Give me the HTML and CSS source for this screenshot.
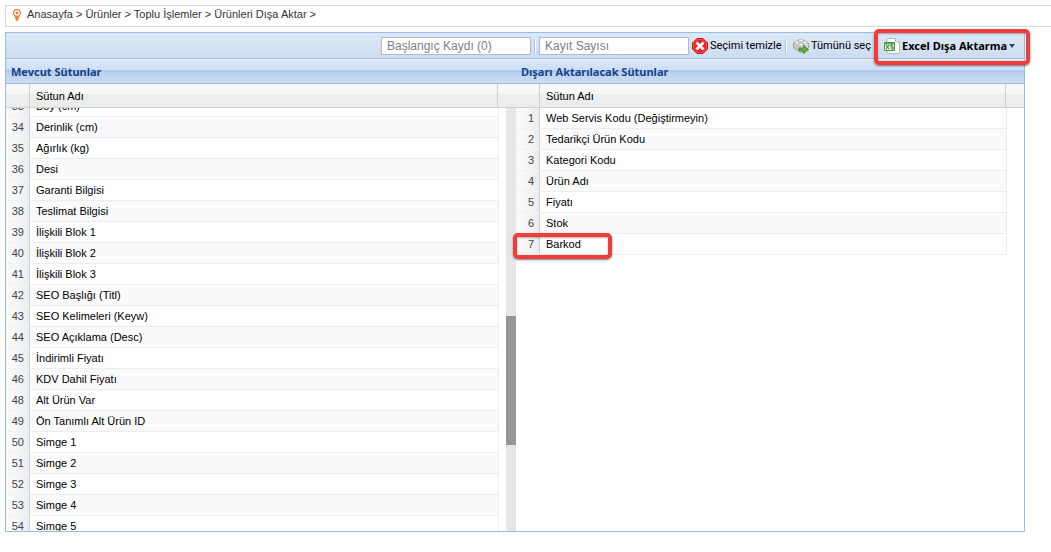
FILE: index.html
```
<!DOCTYPE html>
<html lang="tr">
<head>
<meta charset="utf-8">
<title>Ürünleri Dışa Aktar</title>
<link rel="stylesheet" href="styles.css">
</head>
<body>
<nav class="breadcrumb">
  <svg class="pin" viewBox="0 0 8 12" aria-hidden="true"><path fill="#f47b30" fill-rule="evenodd" d="M4 0a4 4 0 0 1 4 4c0 2-2 4-3.100 5.500h-1.800C2 8 0 6 0 4a4 4 0 0 1 4-4zM4 1.200a2.800 2.800 0 1 0 0 5.600 2.800 2.800 0 0 0 0-5.600z"/><circle cx="4" cy="4" r="1.500" fill="#f47b30"/><path d="M2.500 8h3v3L4 12l-1.500-1z" fill="#f47b30"/></svg>
  <span><a href="#">Anasayfa</a> &gt; <a href="#">Ürünler</a> &gt; <a href="#">Toplu İşlemler</a> &gt; <a href="#">Ürünleri Dışa Aktar</a> &gt;</span>
</nav>
<main class="panel">
  <div class="toolbar">
    <input class="field" type="text" placeholder="Başlangıç Kaydı (0)" aria-label="Başlangıç Kaydı">
    <span class="separator"></span>
    <input class="field" type="text" placeholder="Kayıt Sayısı" aria-label="Kayıt Sayısı">
    <button class="tool clear" type="button">
      <svg class="icon" viewBox="0 0 16 16" aria-hidden="true"><path d="M5 .500h6L15.500 5v6L11 15.500H5L.500 11V5z" fill="#ee2222" stroke="#bb1515"/><path d="M5.300 1.500h5.400l3.800 3.800v5.400l-3.800 3.800H5.300l-3.800-3.800V5.300z" fill="none" stroke="#ff7770" stroke-width=".6"/><path d="M4.500 4.500l7 7M11.500 4.500l-7 7" stroke="#fff" stroke-width="2.800"/></svg>
      Seçimi temizle</button>
    <span class="separator"></span>
    <button class="tool all" type="button">
      <svg class="icon" viewBox="0 0 16 16" aria-hidden="true"><path d="M.500 5L8 1.500 15.500 5v5L8 14.500.500 10z" fill="#dcdcda" stroke="#a3a39f"/><path d="M1 5.500l7 3.500v5L1 10z" fill="#c2c2bf"/><g fill="#f8f8f6" stroke="#a3a39f" stroke-width=".7"><ellipse cx="8" cy="2.500" rx="2.300" ry="1.500"/><ellipse cx="4" cy="4.500" rx="2.300" ry="1.500"/><ellipse cx="12" cy="4.500" rx="2.300" ry="1.500"/><ellipse cx="8" cy="6.500" rx="2.300" ry="1.500"/></g><path d="M6 10h4.500V7.300l5 4.200-5 4.200V13H6z" fill="#62b34c" stroke="#36852a" stroke-width=".8"/></svg>
      Tümünü seç</button>
    <span class="separator"></span>
    <button class="tool export" type="button">
      <svg class="icon" viewBox="0 0 16 16" aria-hidden="true"><path d="M3 .500h9L15.500 4v11.500H3z" fill="#fff" stroke="#aebdcb"/><path d="M11.500.500V4h4" fill="#e5edf5" stroke="#aebdcb"/><path d="M.500 4.500h10v8H.500z" fill="#eef7e9" stroke="#4d9444"/><path d="M1 5h9v1.500H1z" fill="#5ba652"/><path d="M2 7l3 4M5 7l-3 4M9 7H7v2h2v2H6.500" fill="none" stroke="#438c3b" stroke-width="1.200"/></svg>
      Excel Dışa Aktarma<span class="caret"></span></button>
    <span class="mark mark-export"></span>
  </div>
  <div class="titles"><h2>Mevcut Sütunlar</h2><h2>Dışarı Aktarılacak Sütunlar</h2></div>
  <div class="columns">
    <section class="list">
      <div class="head"><span class="head-num"></span><span class="head-name">Sütun Adı</span></div>
      <div class="viewport">
        <table class="rows scrolled">
          <tbody>
          <tr><td>33</td><td>Boy (cm)</td></tr>
          <tr><td>34</td><td>Derinlik (cm)</td></tr>
          <tr><td>35</td><td>Ağırlık (kg)</td></tr>
          <tr><td>36</td><td>Desi</td></tr>
          <tr><td>37</td><td>Garanti Bilgisi</td></tr>
          <tr><td>38</td><td>Teslimat Bilgisi</td></tr>
          <tr><td>39</td><td>İlişkili Blok 1</td></tr>
          <tr><td>40</td><td>İlişkili Blok 2</td></tr>
          <tr><td>41</td><td>İlişkili Blok 3</td></tr>
          <tr><td>42</td><td>SEO Başlığı (Titl)</td></tr>
          <tr><td>43</td><td>SEO Kelimeleri (Keyw)</td></tr>
          <tr><td>44</td><td>SEO Açıklama (Desc)</td></tr>
          <tr><td>45</td><td>İndirimli Fiyatı</td></tr>
          <tr><td>46</td><td>KDV Dahil Fiyatı</td></tr>
          <tr><td>48</td><td>Alt Ürün Var</td></tr>
          <tr><td>49</td><td>Ön Tanımlı Alt Ürün ID</td></tr>
          <tr><td>50</td><td>Simge 1</td></tr>
          <tr><td>51</td><td>Simge 2</td></tr>
          <tr><td>52</td><td>Simge 3</td></tr>
          <tr><td>53</td><td>Simge 4</td></tr>
          <tr><td>54</td><td>Simge 5</td></tr>
          </tbody>
        </table>
        <div class="track"><span class="thumb"></span></div>
      </div>
    </section>
    <section class="list">
      <div class="head"><span class="head-num"></span><span class="head-name">Sütun Adı</span></div>
      <div class="viewport open">
        <table class="rows">
          <tbody>
          <tr><td>1</td><td>Web Servis Kodu (Değiştirmeyin)</td></tr>
          <tr><td>2</td><td>Tedarikçi Ürün Kodu</td></tr>
          <tr><td>3</td><td>Kategori Kodu</td></tr>
          <tr><td>4</td><td>Ürün Adı</td></tr>
          <tr><td>5</td><td>Fiyatı</td></tr>
          <tr><td>6</td><td>Stok</td></tr>
          <tr><td class="marked">7<span class="mark mark-row"></span></td><td>Barkod</td></tr>
          </tbody>
        </table>
      </div>
    </section>
  </div>
</main>
</body>
</html>
```
FILE: styles.css
```
* { box-sizing: border-box; }
body {
  margin: 0;
  padding: 5px 0 0 5px;
  background: #fff;
  font: 11px/13px "Liberation Sans", Arial, sans-serif;
  color: #000;
  overflow: hidden;
}
.breadcrumb {
  display: flex;
  align-items: center;
  gap: 6px;
  height: 22px;
  padding: 0 7px 3px;
  border: 1px solid #d8d8d8;
  border-right: 0;
  color: #333;
}
.breadcrumb a { color: inherit; text-decoration: none; }
.pin { width: 8px; height: 12px; }
.panel {
  margin: 5px 26px 0 0;
  border: 1px solid #99bbe8;
}
.toolbar {
  position: relative;
  display: flex;
  align-items: center;
  justify-content: flex-end;
  height: 26px;
  padding-right: 6px;
  border-bottom: 1px solid #99bbe8;
  background: linear-gradient(#dce8f6, #cddcee);
}
.field {
  width: 150px;
  height: 18px;
  padding: 0 5px;
  border: 1px solid #b5b8c8;
  border-radius: 0;
  background: #fff;
  font: 12px "Liberation Sans", Arial, sans-serif;
}
.field::placeholder { color: #7f7f7f; opacity: 1; }
.separator {
  width: 2px;
  height: 14px;
  margin: 0 3px;
  border-left: 1px solid #98c8ff;
  border-right: 1px solid #fff;
}
.tool {
  display: flex;
  align-items: center;
  gap: 2px;
  padding: 0;
  border: 0;
  background: none;
  font: 11px/16px Roboto, Tahoma, sans-serif;
  color: #000;
  white-space: nowrap;
}
.icon { width: 16px; height: 16px; flex: none; }
.clear { width: 93px; padding-left: 3px; }
.all { width: 80px; margin-left: 3px; }
.export {
  width: 134px;
  margin-left: 3px;
  font-family: "Noto Sans", Tahoma, sans-serif;
  font-weight: bold;
}
.caret {
  border: 3px solid transparent;
  border-top: 4px solid #1d4c7c;
  border-bottom: 0;
}
.mark {
  position: absolute;
  border: 4px solid #f13c3c;
  border-radius: 5px;
  box-shadow: 0 1px 2px rgba(0, 0, 0, .5), inset 0 1px 2px rgba(0, 0, 0, .3);
  pointer-events: none;
}
.mark-export { top: -4px; right: -6px; width: 156px; height: 36px; }
.titles {
  display: grid;
  grid-template-columns: 510fr 508fr;
  height: 25px;
  border-top: 1px solid #edf4fd;
  border-bottom: 1px solid #99bbe8;
  background: linear-gradient(#dae7f6 0, #cddef3 45%, #abc7ec 46%, #abc7ec 50%, #b8cfee 51%, #cbddf3);
}
.titles h2 {
  margin: 0;
  padding: 4px 5px 0;
  font: bold 11px/16px "Noto Sans", Tahoma, sans-serif;
  color: #15428b;
}
.columns { display: grid; grid-template-columns: 510fr 508fr; }
.list { min-width: 0; }
.head {
  display: flex;
  height: 24px;
  padding-right: 18px;
  border-bottom: 1px solid #d0d0d0;
  background: linear-gradient(#f9f9f9 0, #f7f7f7 42%, #efefef 43%, #eaebec);
}
.head-num { width: 24px; border-right: 1px solid #d0d0d0; }
.head-name {
  flex: 1;
  padding: 6px 6px 0;
  border-right: 1px solid #d0d0d0;
}
.viewport {
  display: flex;
  align-items: flex-start;
  justify-content: space-between;
  height: calc(100vh - 129px);
  overflow: hidden;
}
.open { overflow: visible; }
.rows {
  width: calc(100% - 17px);
  border-collapse: separate;
  border-spacing: 0;
}
.scrolled { margin-top: -12px; }
.rows td {
  height: 21px;
  padding: 1px 6px 0;
  border-bottom: 1px solid #ededed;
  border-right: 1px solid #ededed;
}
.rows td:first-child {
  width: 24px;
  padding: 1px 5px 0 0;
  border-right-color: #d0d0d0;
  border-bottom-color: #f1f2f2;
  background: linear-gradient(90deg, #f9f9f9 30%, #e9ecef);
  color: #444;
  text-align: right;
}
.rows tr:nth-child(even) { background: #fafafa; }
.rows td.marked { position: relative; }
.mark-row { top: -1px; left: -3px; width: 99px; height: 26px; }
.track {
  display: flow-root;
  width: 10px;
  height: 100%;
  background: #e6e6e6;
}
.thumb {
  display: block;
  height: 129px;
  margin-top: 208px;
  background: #969696;
}
```
